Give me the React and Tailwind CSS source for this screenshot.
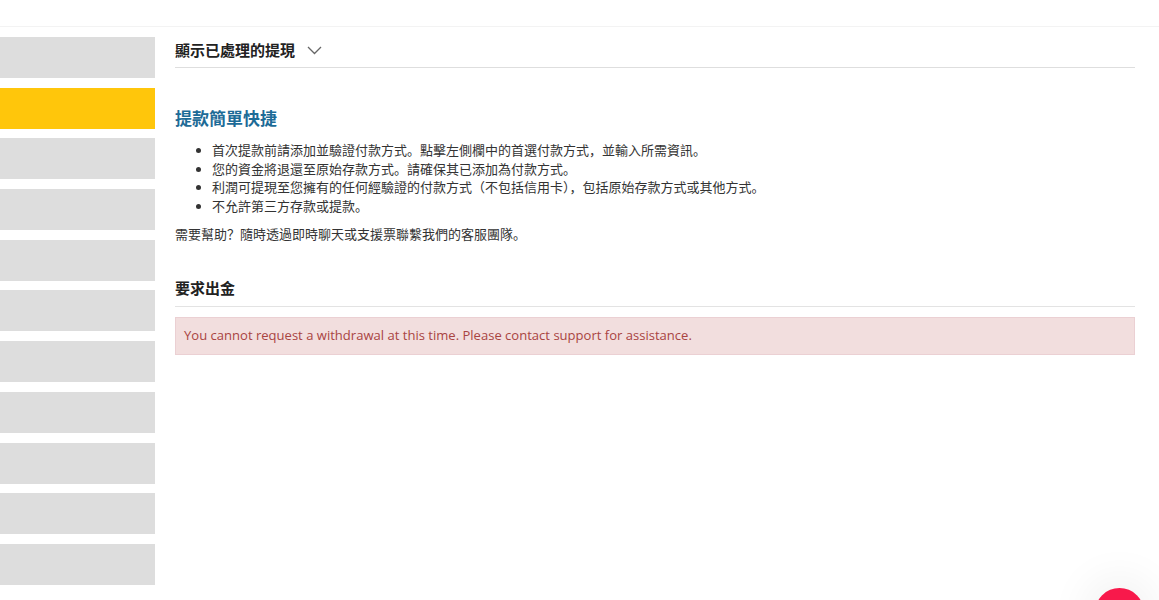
import React from "react";

const font = { fontFamily: '"Open Sans", "Noto Sans CJK SC", sans-serif' };

export default function App() {
  const boxes = Array.from({ length: 11 }, (_, i) => i);
  return (
    <div className="relative w-[1159px] h-[600px] overflow-hidden bg-white text-[#333]" style={font}>
      <div className="h-[27px] border-b border-[#f3f3f3]"></div>
      <div className="flex">
        <div className="w-[155px] shrink-0 pt-[10px] flex flex-col gap-[9.7px]">
          {boxes.map((i) => (
            <div
              key={i}
              className={i === 1 ? "h-[41px] bg-[#ffc60b]" : "h-[41px] bg-[#dddddd]"}
            ></div>
          ))}
        </div>
        <div className="ml-[20px] w-[960px] pt-[11px]">
          <div className="h-[30px] pb-[4px] flex items-center border-b border-[#dedede]">
            <span className="text-[15px] font-bold text-[#222]">顯示已處理的提現</span>
            <svg className="ml-[12px]" width="15" height="9" viewBox="0 0 15 9" fill="none">
              <polyline points="1,1 7.5,7.5 14,1" stroke="#666" strokeWidth="1.3" />
            </svg>
          </div>
          <h2 className="mt-[39px] text-[17px] leading-[24px] font-bold text-[#1d6b97]">提款簡單快捷</h2>
          <ul className="mt-[10px] list-disc pl-[37px] text-[13px] leading-[18.7px] text-[#333]">
            <li>首次提款前請添加並驗證付款方式。點擊左側欄中的首選付款方式，並輸入所需資訊。</li>
            <li>您的資金將退還至原始存款方式。請確保其已添加為付款方式。</li>
            <li>利潤可提現至您擁有的任何經驗證的付款方式（不包括信用卡），包括原始存款方式或其他方式。</li>
            <li>不允許第三方存款或提款。</li>
          </ul>
          <p className="mt-[9px] text-[13px] leading-[18.7px] text-[#333]">
            需要幫助？隨時透過即時聊天或支援票聯繫我們的客服團隊。
          </p>
          <div className="mt-[33px] pb-[7px] border-b border-[#e3e3e3]">
            <h3 className="text-[15px] leading-[22px] font-bold text-[#222]">要求出金</h3>
          </div>
          <div className="mt-[10px] h-[38px] flex items-center px-[8px] bg-[#f2dede] border border-[#ebd0d3] text-[13.05px] text-[#a94442]">
            You cannot request a withdrawal at this time. Please contact support for assistance.
          </div>
        </div>
      </div>
      <div className="absolute left-[1095px] top-[588px] w-[49px] h-[49px] rounded-full bg-[#f8194b] shadow-[0_0_40px_12px_rgba(0,0,0,0.05)]"></div>
    </div>
  );
}
